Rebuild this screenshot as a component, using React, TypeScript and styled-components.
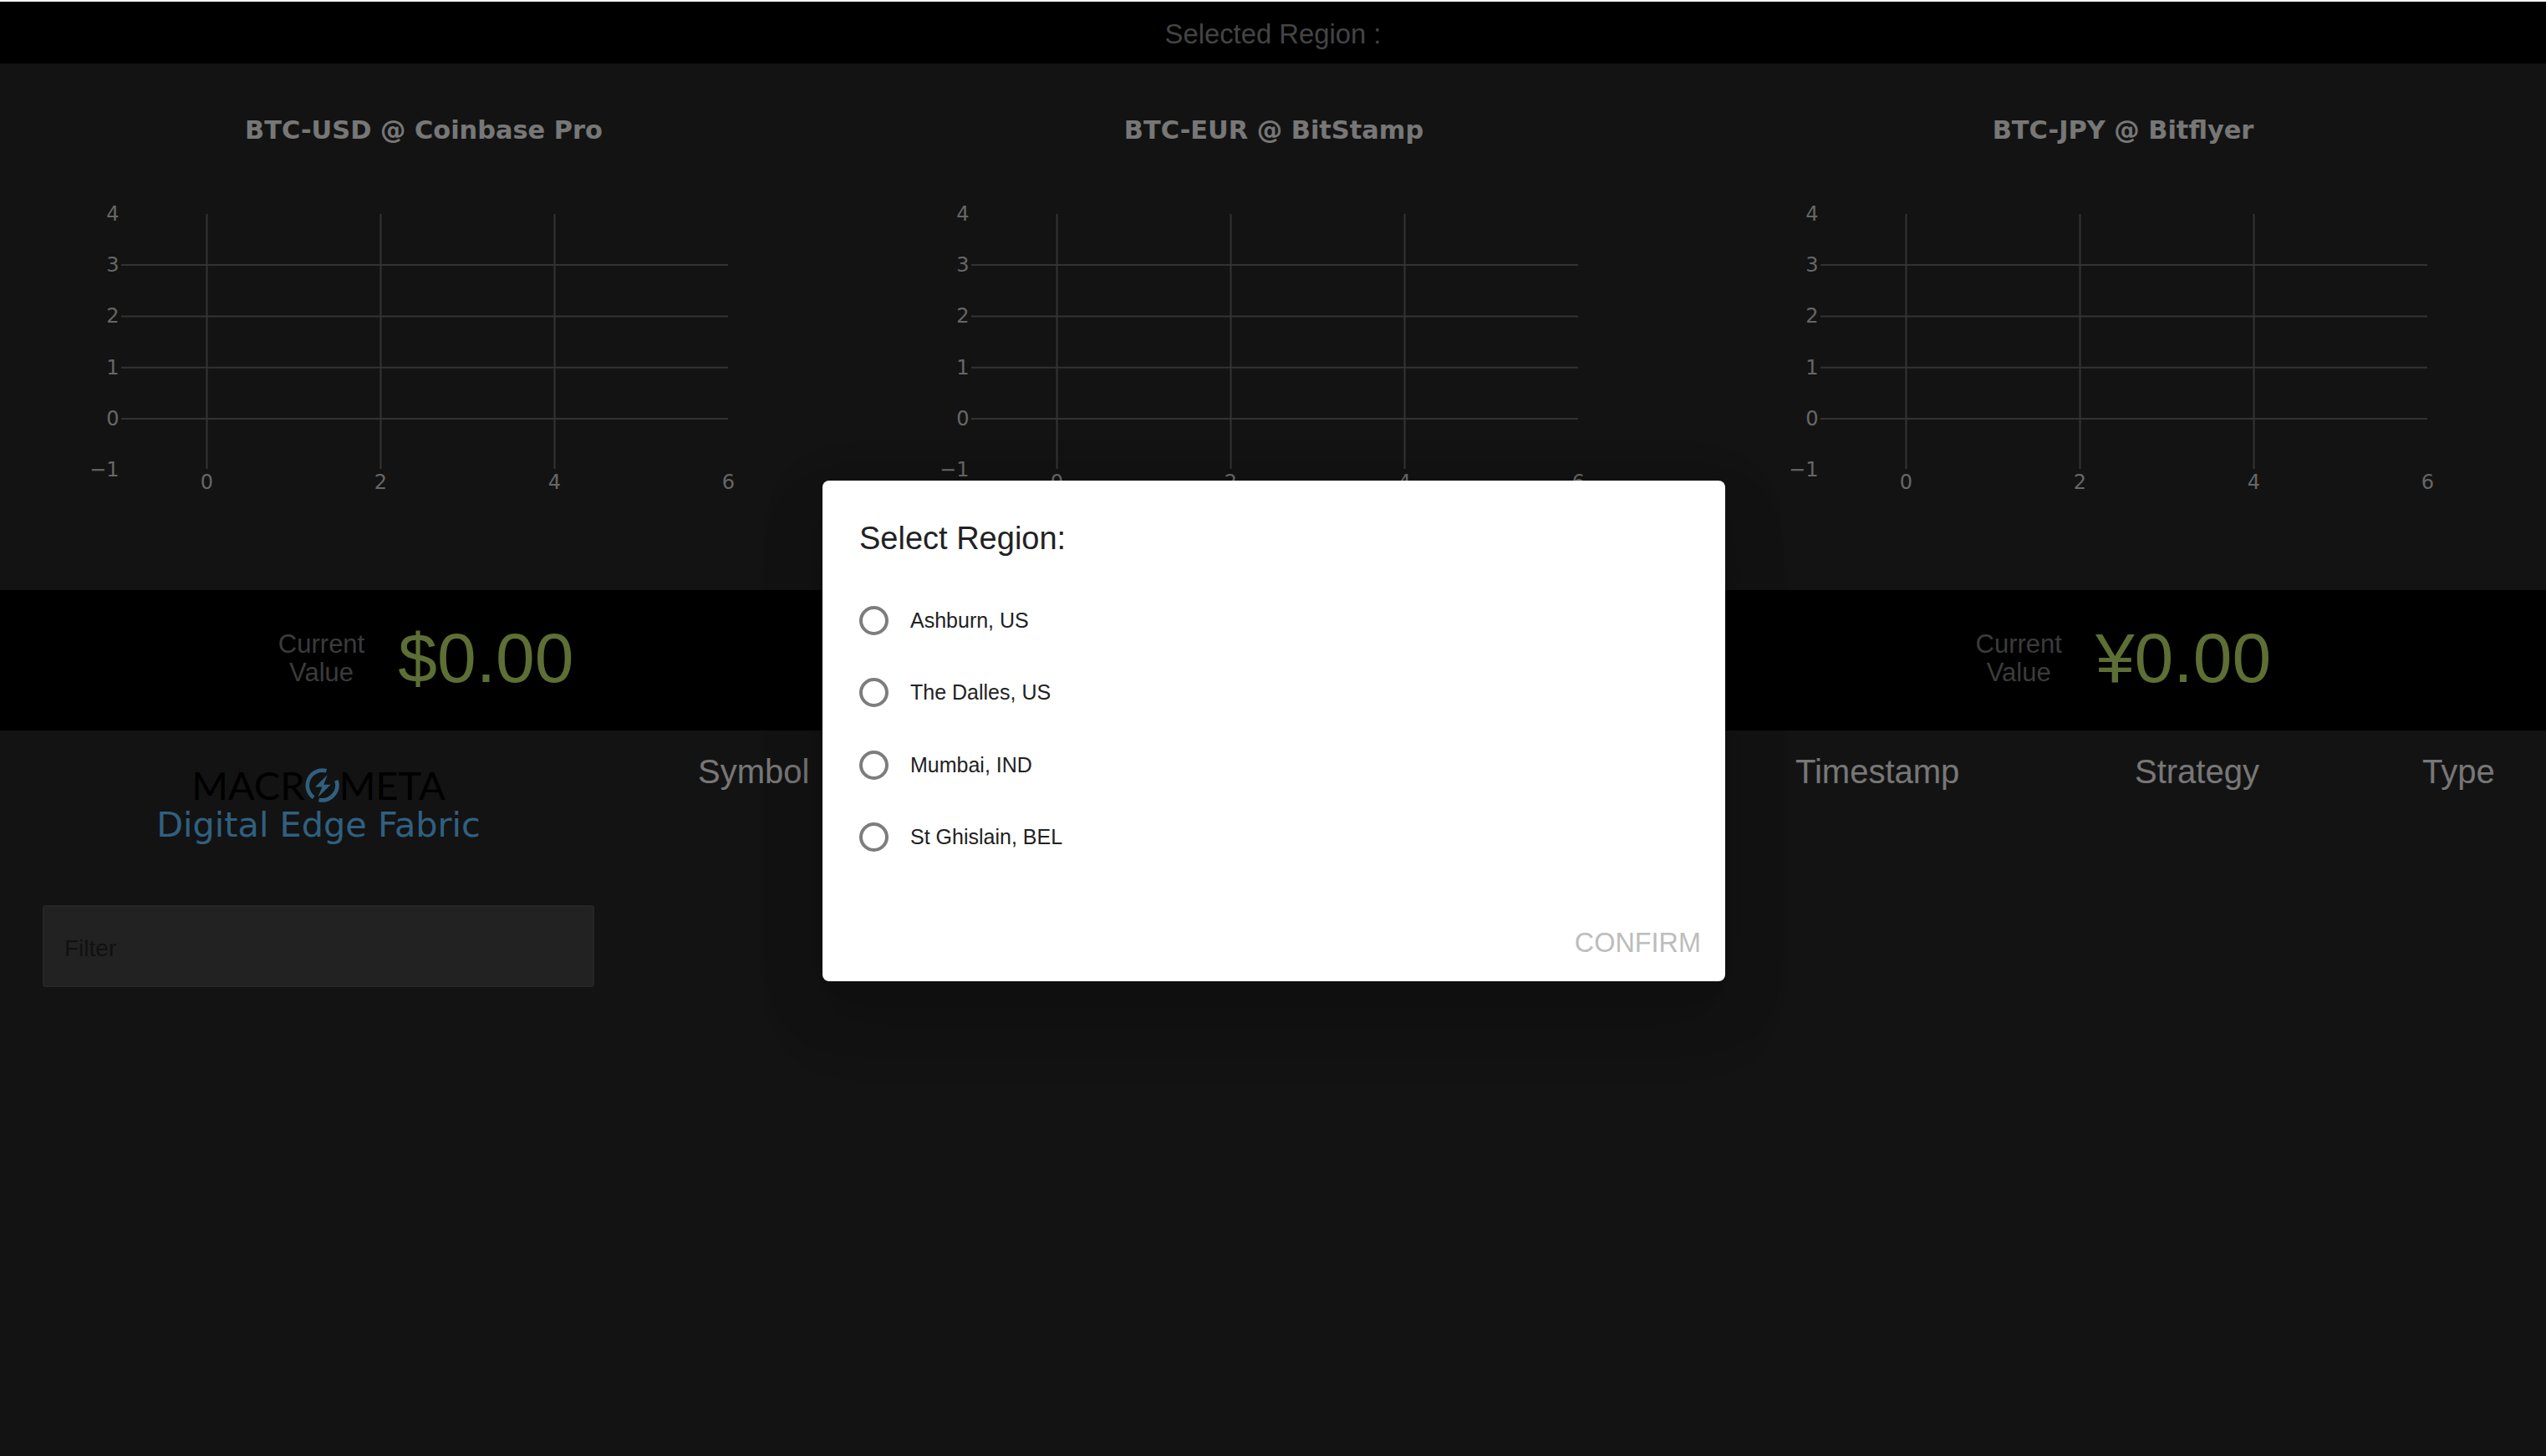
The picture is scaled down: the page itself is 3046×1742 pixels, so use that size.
import { createGlobalStyle, styled } from "styled-components";

const GlobalStyle = createGlobalStyle`
  html, body {
    margin: 0;
    padding: 0;
    background: #262626;
    font-family: "Liberation Sans", Arial, sans-serif;
  }
`;

const Page = styled.div`
  position: relative;
  width: 3046px;
  height: 1742px;
  overflow: hidden;
  border-top: 2px solid #fff;
  box-sizing: border-box;
  background: #262626;
`;

const Backdrop = styled.div`
  position: absolute;
  inset: 0;
  background: rgba(0, 0, 0, 0.5);
`;

const TopBar = styled.div`
  height: 74px;
  background: #000;
  color: #888;
  font-size: 32.8px;
  line-height: 78px;
  text-align: center;
`;

const Charts = styled.div`
  display: grid;
  grid-template-columns: repeat(3, 1016.5px);
  height: 630px;
`;

const ChartSvg = styled.svg`
  display: block;
  width: 1015px;
  height: 630px;
  font-family: "DejaVu Sans", Verdana, sans-serif;
`;

const ChartTitle = styled.text`
  font-size: 30.4px;
  font-weight: 700;
  fill: #eee;
  text-anchor: middle;
`;

const Tick = styled.text<{ $anchor: string }>`
  font-size: 24px;
  fill: #ccc;
  text-anchor: ${(p) => p.$anchor};
`;

const ValueBand = styled.div`
  display: grid;
  grid-template-columns: repeat(3, 1fr);
  height: 168px;
  background: #000;
`;

const ValueCell = styled.div`
  display: flex;
  align-items: center;
  justify-content: center;
  gap: 40px;
  padding: 0 0 4px 4px;
`;

const ValueLabel = styled.div`
  color: #777;
  font-size: 31px;
  line-height: 34px;
  text-align: center;
`;

const ValueAmount = styled.div`
  color: #bcdf6a;
  font-size: 84px;
  line-height: 84px;
  margin-bottom: 2px;
`;

const Bottom = styled.div`
  display: flex;
`;

const Sidebar = styled.div`
  box-sizing: border-box;
  width: 760px;
  display: flex;
  flex-direction: column;
  align-items: center;
  padding: 43px 0 0 2px;
`;

const Logo = styled.div`
  display: flex;
  align-items: center;
  height: 44px;
  color: #000;
  font-family: Lato, sans-serif;
  font-size: 47px;
  line-height: 44px;
`;

const Tagline = styled.div`
  color: #60c0ff;
  font-family: "DejaVu Sans", Verdana, sans-serif;
  font-size: 41.4px;
  line-height: 56px;
  margin-top: -2px;
`;

const FilterBox = styled.div`
  box-sizing: border-box;
  width: 660px;
  height: 98px;
  margin-top: 68px;
  padding: 20px 24px 0;
  background: #444;
  border: 2px solid #4c4c4c;
  border-radius: 4px;
  color: #222;
  font-size: 28px;
  line-height: 60px;
`;

const TableHead = styled.div`
  display: grid;
  grid-template-columns: 1313px 406px 344px auto;
  padding: 24px 0 0 75px;
  height: 60px;
  color: #eee;
  font-size: 40px;
  line-height: 50px;
`;

const Dialog = styled.div`
  position: absolute;
  left: 984px;
  top: 573px;
  box-sizing: border-box;
  width: 1080px;
  height: 599px;
  padding: 44px 29px 0 44px;
  display: flex;
  flex-direction: column;
  background: #fff;
  border-radius: 8px;
  box-shadow: 0 22px 70px 6px rgba(0, 0, 0, 0.14), 0 48px 76px 8px rgba(0, 0, 0, 0.1);
`;

const DialogTitle = styled.div`
  color: #222;
  font-size: 38px;
  line-height: 50px;
`;

const Options = styled.div`
  display: flex;
  flex-direction: column;
  margin-top: 30px;
`;

const Option = styled.div`
  display: flex;
  align-items: center;
  gap: 26px;
  height: 86.5px;
  color: #222;
  font-size: 25px;
`;

const Radio = styled.span`
  box-sizing: border-box;
  width: 35px;
  height: 35px;
  border: 4px solid #7d7d7d;
  border-radius: 50%;
`;

const ConfirmRow = styled.div`
  margin-top: auto;
  padding-bottom: 26px;
  text-align: right;
  color: #bdbdbd;
  font-size: 32.4px;
  line-height: 40px;
`;

const xTicks = [0, 2, 4, 6];
const yTicks = [4, 3, 2, 1, 0, -1];
const xAt = (v: number) => 247.5 + v * 104;
const yAt = (v: number) => 425 - v * 61.3;

const Chart = ({ title }: { title: string }) => (
  <ChartSvg viewBox="0 0 1015 630">
    <ChartTitle x={507} y={90}>
      {title}
    </ChartTitle>
    {[3, 2, 1, 0].map((v) => (
      <line key={v} x1={145} x2={871} y1={yAt(v)} y2={yAt(v)} stroke="#666" strokeWidth={2} />
    ))}
    {[0, 2, 4].map((v) => (
      <line key={v} x1={xAt(v)} x2={xAt(v)} y1={180} y2={485} stroke="#666" strokeWidth={2} />
    ))}
    {yTicks.map((v) => (
      <Tick key={v} $anchor="end" x={142.5} y={yAt(v) + 8}>
        {v < 0 ? `\u2212${-v}` : v}
      </Tick>
    ))}
    {xTicks.map((v) => (
      <Tick key={v} $anchor="middle" x={xAt(v)} y={509}>
        {v}
      </Tick>
    ))}
  </ChartSvg>
);

const Bolt = () => (
  <svg width="41" height="43" viewBox="0 0 40 42">
    <path
      d="M24.8 4.2 A17.5 17.5 0 0 0 10 35.3 M16.1 38 A17.5 17.5 0 0 0 36.5 15.3"
      fill="none"
      stroke="#60c0ff"
      strokeWidth="4.5"
    />
    <path d="M26 9 L11.7 23 H20 L15 35 L30 20.3 H21.7 Z" fill="#60c0ff" />
  </svg>
);

const charts = ["BTC-USD @ Coinbase Pro", "BTC-EUR @ BitStamp", "BTC-JPY @ Bitflyer"];
const amounts = ["$0.00", "\u20ac0.00", "\u00a50.00"];
const regions = ["Ashburn, US", "The Dalles, US", "Mumbai, IND", "St Ghislain, BEL"];
const columns = ["Symbol", "Timestamp", "Strategy", "Type"];

export default function App() {
  return (
    <>
      <GlobalStyle />
      <Page>
        <TopBar>Selected Region :</TopBar>
        <Charts>
          {charts.map((c) => (
            <Chart key={c} title={c} />
          ))}
        </Charts>
        <ValueBand>
          {amounts.map((a) => (
            <ValueCell key={a}>
              <ValueLabel>
                Current
                <br />
                Value
              </ValueLabel>
              <ValueAmount>{a}</ValueAmount>
            </ValueCell>
          ))}
        </ValueBand>
        <Bottom>
          <Sidebar>
            <Logo>
              MACR
              <Bolt />
              META
            </Logo>
            <Tagline>Digital Edge Fabric</Tagline>
            <FilterBox>Filter</FilterBox>
          </Sidebar>
          <TableHead>
            {columns.map((c) => (
              <div key={c}>{c}</div>
            ))}
          </TableHead>
        </Bottom>
        <Backdrop />
        <Dialog>
          <DialogTitle>Select Region:</DialogTitle>
          <Options>
            {regions.map((r) => (
              <Option key={r}>
                <Radio />
                {r}
              </Option>
            ))}
          </Options>
          <ConfirmRow>CONFIRM</ConfirmRow>
        </Dialog>
      </Page>
    </>
  );
}
